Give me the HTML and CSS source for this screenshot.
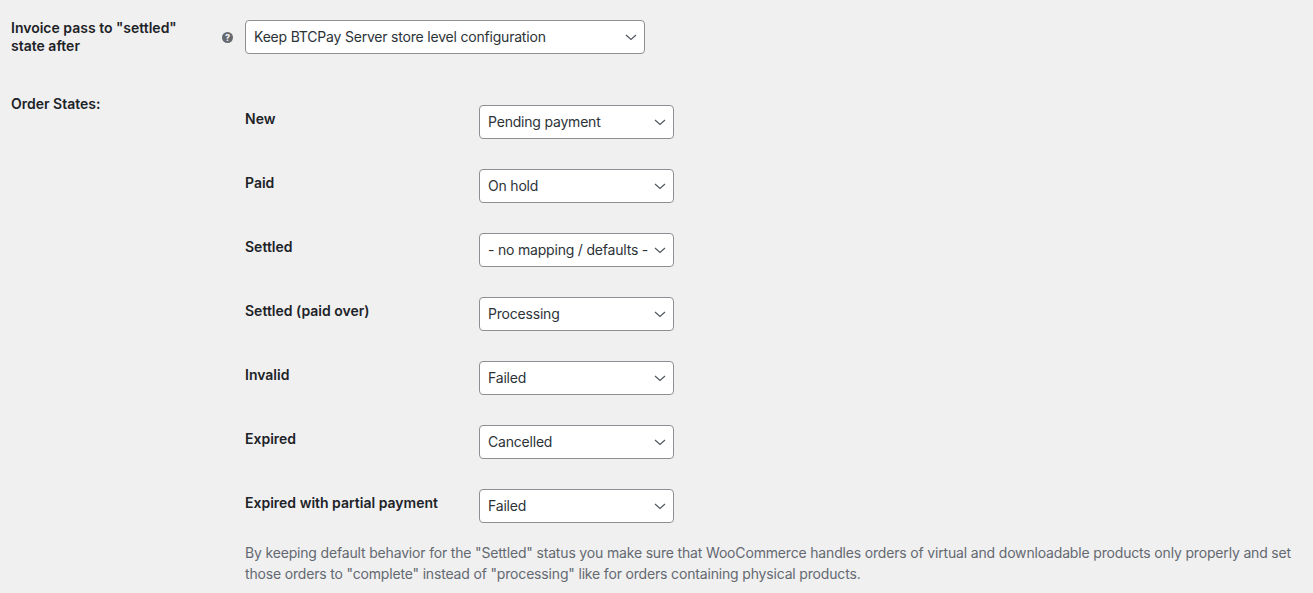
FILE: index.html
```html
<!DOCTYPE html>
<html lang="en">
<head>
    <meta charset="UTF-8">
    <meta name="viewport" content="width=device-width, initial-scale=1.0">
    <title>Order States</title>
    <link rel="stylesheet" href="styles.css">
</head>
<body>
    <div class="settings">
        <div class="row row-settled">
            <div class="row-title">
                <label class="title" for="settled-after">Invoice pass to "settled" state after</label>
                <span class="tip">?</span>
            </div>
            <select class="field field-wide" id="settled-after">
                <option>Keep BTCPay Server store level configuration</option>
            </select>
        </div>
        <div class="row row-states">
            <div class="row-title">
                <span class="title">Order States:</span>
            </div>
            <div class="states">
                <div class="states-grid">
                    <label class="state-label">New</label>
                    <select class="field"><option>Pending payment</option></select>
                    <label class="state-label">Paid</label>
                    <select class="field"><option>On hold</option></select>
                    <label class="state-label">Settled</label>
                    <select class="field"><option>- no mapping / defaults -</option></select>
                    <label class="state-label">Settled (paid over)</label>
                    <select class="field"><option>Processing</option></select>
                    <label class="state-label">Invalid</label>
                    <select class="field"><option>Failed</option></select>
                    <label class="state-label">Expired</label>
                    <select class="field"><option>Cancelled</option></select>
                    <label class="state-label">Expired with partial payment</label>
                    <select class="field"><option>Failed</option></select>
                </div>
                <p class="description">By keeping default behavior for the "Settled" status you make sure that WooCommerce handles orders of virtual and downloadable products only properly and set those orders to "complete" instead of "processing" like for orders containing physical products.</p>
            </div>
        </div>
    </div>
</body>
</html>
```

FILE: styles.css
```css
html, body {
    height: 100%;
}

body {
    margin: 0;
    overflow: hidden;
    background-color: #f0f0f1;
    color: #1d2327;
    font-family: 'Inter', 'Liberation Sans', sans-serif;
    font-size: 14px;
}

.settings {
    padding: 19px 0 0 11px;
}

.row {
    display: grid;
    grid-template-columns: 234px 1fr;
}

.row-settled {
    margin-bottom: 40px;
}

.row-title {
    display: flex;
    justify-content: space-between;
    align-items: center;
    align-self: start;
    padding-right: 12px;
}

.title {
    width: 180px;
    font-weight: 600;
    line-height: 18px;
}

.tip {
    width: 11px;
    height: 11px;
    border-radius: 50%;
    background-color: #646970;
    color: #f0f0f1;
    font-size: 9px;
    font-weight: 800;
    line-height: 11px;
    text-align: center;
}

.field {
    display: block;
    width: 195px;
    height: 34px;
    margin: 0;
    padding: 0 20px 2px 8px;
    border: 1px solid #8c8f94;
    border-radius: 4px;
    background: #fff url("data:image/svg+xml,%3Csvg xmlns='http://www.w3.org/2000/svg' width='12' height='8' viewBox='0 0 12 8'%3E%3Cpath d='M1 2l5 4.5 5-4.5' fill='none' stroke='%2350575e' stroke-width='1.2'/%3E%3C/svg%3E") no-repeat right 7px center;
    color: #2c3338;
    font-family: inherit;
    font-size: 14px;
    letter-spacing: -0.2px;
    appearance: none;
}

.field-wide {
    width: 400px;
    margin-top: 1px;
}

.states {
    padding-top: 10px;
}

.states-grid {
    display: grid;
    grid-template-columns: 234px 195px;
    row-gap: 30px;
}

.state-label {
    padding-top: 5px;
    font-weight: 600;
    line-height: 18px;
}

.description {
    margin: 19px 0 0;
    width: 1060px;
    color: #646970;
    line-height: 21px;
    letter-spacing: -0.17px;
}
```
